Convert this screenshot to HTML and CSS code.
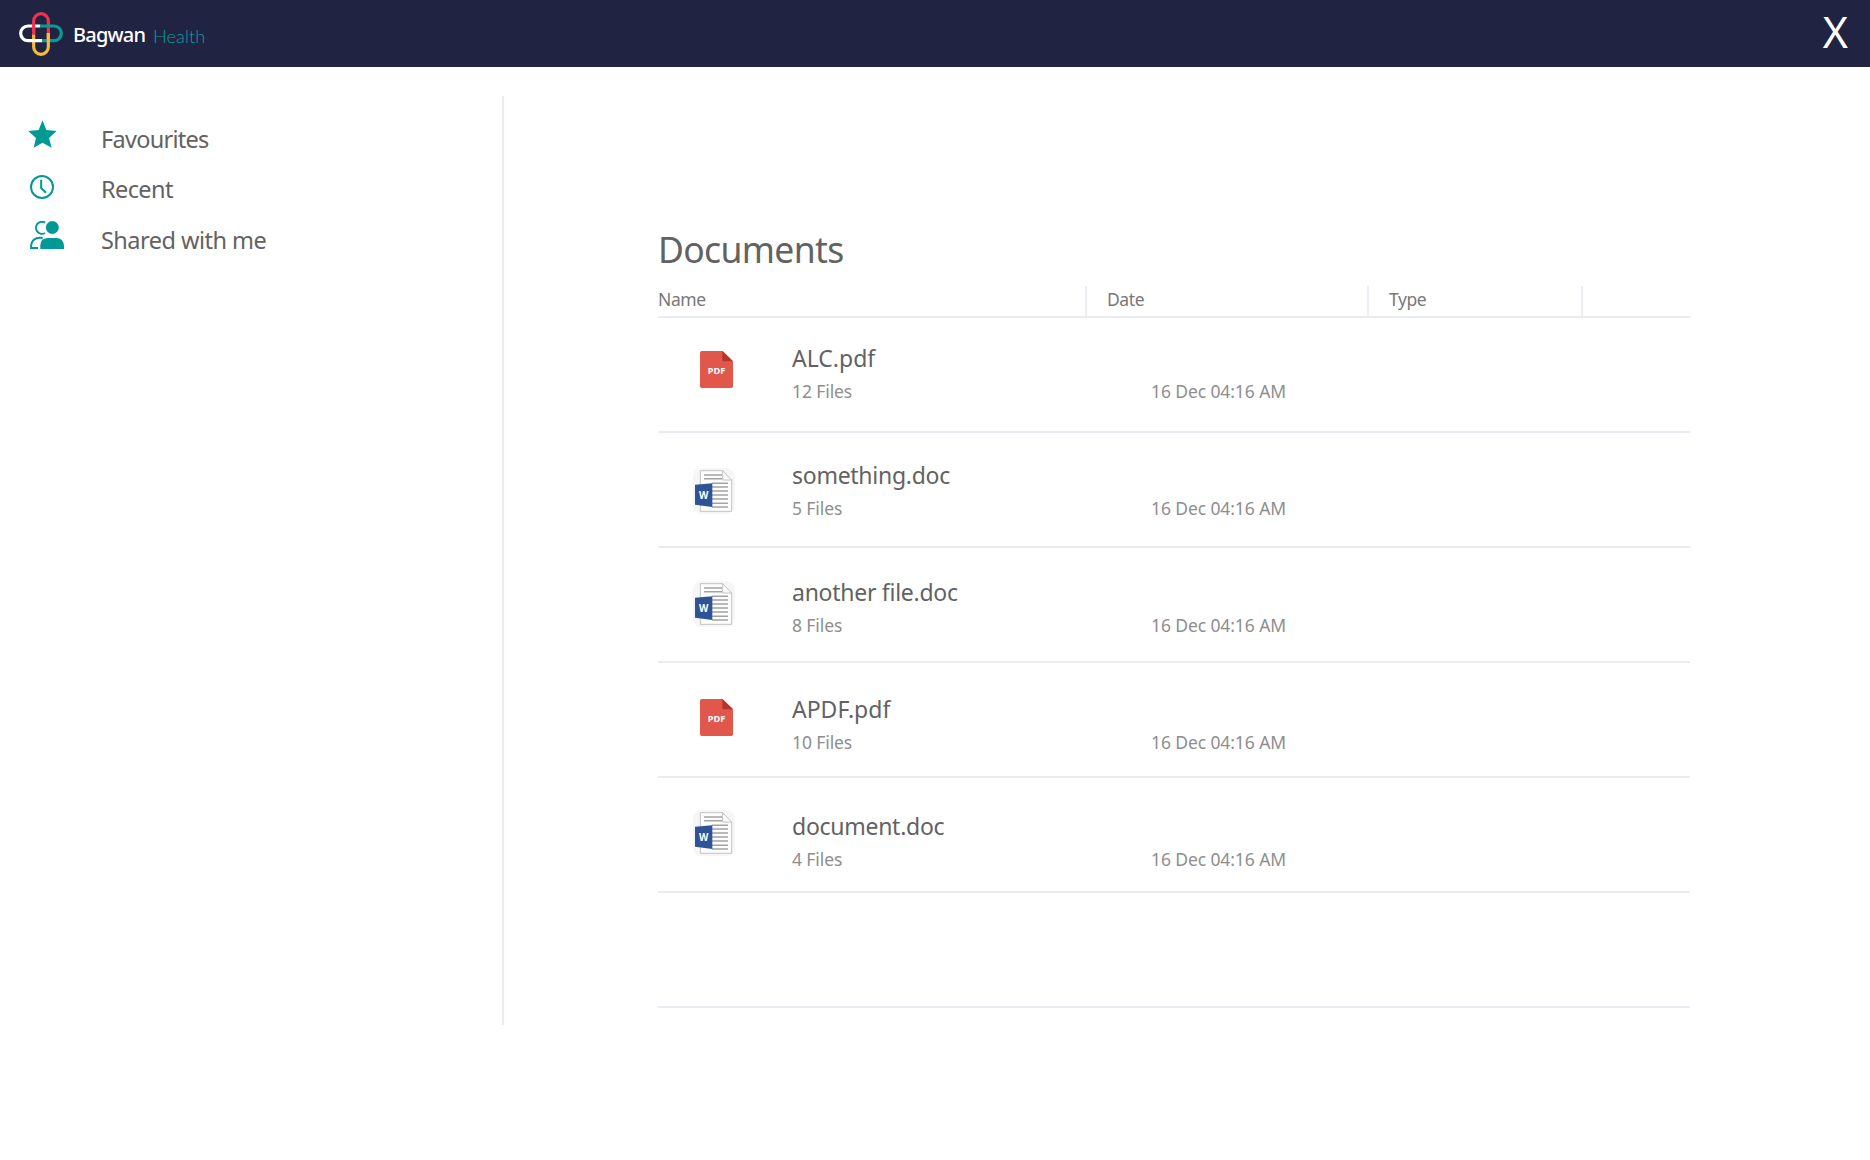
FILE: index.html
```html
<!DOCTYPE html>
<html lang="en">
<head>
<meta charset="utf-8">
<title>Bagwan Health - Documents</title>
<link rel="stylesheet" href="styles.css">
</head>
<body>
<svg class="defs" width="0" height="0" aria-hidden="true">
  <symbol id="pdf" viewBox="0 0 99 111">
    <path d="M5 0H68L99 31V106Q99 111 94 111H5Q0 111 0 106V5Q0 0 5 0Z" fill="#e2574c"/>
    <path d="M67 0L99 31H71Q67 31 67 27Z" fill="#b53629"/>
  </symbol>
  <symbol id="doc" viewBox="0 0 126 138">
    <rect width="126" height="138" rx="26" fill="#f6f6f6"/>
    <path d="M22 8H89L116 36V130H22Z" fill="#fcfcfc" stroke="#b9b9b9" stroke-width="2.5"/>
    <path d="M89 8V36H116" fill="none" stroke="#b9b9b9" stroke-width="2.5"/>
    <path d="M33 21H87M33 32H87M57 46H105M57 57H105M57 69H105M57 81H105M57 93H105M57 106H105M57 117H105" stroke="#a3a3a3" stroke-width="4.500"/>
    <path d="M6 50L58 46V117L6 110Z" fill="#2f5496"/>
  </symbol>
</svg>

<header class="topbar">
  <svg class="logo" width="50" height="50" viewBox="0 0 150 150" fill="none" stroke-width="9.500">
    <path d="M53 77V36a22 22 0 0 1 44 0V73" stroke="#ec3450"/>
    <path d="M53 76V114a22 22 0 0 0 44 0V72" stroke="#fbb93c"/>
    <path d="M73 51H36a22 22 0 0 0 0 44H79" stroke="#fff"/>
    <path d="M72 51H114a22 22 0 0 1 0 44H78" stroke="#0a9a94"/>
    <path d="M53 44V77" stroke="#ec3450"/>
    <path d="M97 72V101" stroke="#fbb93c"/>
  </svg>
  <span class="brand">Bagwan</span>
  <span class="brand-sub">Health</span>
  <button class="close" aria-label="Close">X</button>
</header>

<div class="page">
  <nav class="sidebar">
    <a class="nav-item">
      <svg class="nav-icon star" width="29" height="28" viewBox="0 0 87 84"><path d="M43.500 1L55 30L86 33L63 54L71 83L43.500 68L17 83L24 54L1 33L32 30Z" fill="#009994"/></svg>
      <span>Favourites</span>
    </a>
    <a class="nav-item">
      <svg class="nav-icon clock" width="24" height="24" viewBox="0 0 72 72" fill="none" stroke="#009994" stroke-width="6"><circle cx="36" cy="36" r="33"/><path d="M33.500 14V39L48 53"/></svg>
      <span>Recent</span>
    </a>
    <a class="nav-item">
      <svg class="nav-icon people" width="34" height="28" viewBox="0 0 102 84">
        <circle cx="67" cy="19.500" r="19.500" fill="#009994"/>
        <path d="M45 5A18 18 0 1 0 45 36" fill="none" stroke="#009994" stroke-width="6"/>
        <path d="M38 51Q3 46 3 81H24" fill="none" stroke="#009994" stroke-width="6"/>
        <path d="M31 84V73Q31 51 55 51H78Q102 51 102 77V84Z" fill="#009994"/>
      </svg>
      <span>Shared with me</span>
    </a>
  </nav>

  <main class="content">
    <h1>Documents</h1>
    <div class="columns">
      <span class="col-name">Name</span>
      <span class="col-date">Date</span>
      <span class="col-type">Type</span>
      <span class="col-end"></span>
    </div>
    <div class="rows">
      <div class="row">
        <svg class="icon-pdf" width="33" height="37" viewBox="0 0 99 111"><use href="#pdf"/><text x="23" y="69" class="pdf-label" textLength="53" lengthAdjust="spacingAndGlyphs">PDF</text></svg>
        <div class="file"><div class="file-name short">ALC.pdf</div><div class="meta">12 Files</div></div>
        <div class="date">16 Dec 04:16 AM</div>
      </div>
      <div class="row">
        <svg class="icon-doc" width="42" height="46" viewBox="0 0 126 138"><use href="#doc"/><text x="18" y="94" class="doc-label" textLength="28" lengthAdjust="spacingAndGlyphs">W</text></svg>
        <div class="file"><div class="file-name">something.doc</div><div class="meta">5 Files</div></div>
        <div class="date">16 Dec 04:16 AM</div>
      </div>
      <div class="row">
        <svg class="icon-doc" width="42" height="46" viewBox="0 0 126 138"><use href="#doc"/><text x="18" y="94" class="doc-label" textLength="28" lengthAdjust="spacingAndGlyphs">W</text></svg>
        <div class="file"><div class="file-name">another file.doc</div><div class="meta">8 Files</div></div>
        <div class="date">16 Dec 04:16 AM</div>
      </div>
      <div class="row">
        <svg class="icon-pdf" width="33" height="37" viewBox="0 0 99 111"><use href="#pdf"/><text x="23" y="69" class="pdf-label" textLength="53" lengthAdjust="spacingAndGlyphs">PDF</text></svg>
        <div class="file"><div class="file-name short">APDF.pdf</div><div class="meta">10 Files</div></div>
        <div class="date">16 Dec 04:16 AM</div>
      </div>
      <div class="row">
        <svg class="icon-doc" width="42" height="46" viewBox="0 0 126 138"><use href="#doc"/><text x="18" y="94" class="doc-label" textLength="28" lengthAdjust="spacingAndGlyphs">W</text></svg>
        <div class="file"><div class="file-name">document.doc</div><div class="meta">4 Files</div></div>
        <div class="date">16 Dec 04:16 AM</div>
      </div>
      <div class="row"></div>
    </div>
  </main>
</div>
</body>
</html>
```
FILE: styles.css
```css
* { box-sizing: border-box; }

body {
  margin: 0;
  background: #fff;
  color: #626262;
  font-family: "Noto Sans", "Open Sans", sans-serif;
}

.defs { position: absolute; }

.pdf-label { font: 700 28px "Open Sans", sans-serif; fill: #fff; }
.doc-label { font: 700 34px "Open Sans", sans-serif; fill: #fff; }

.topbar {
  display: flex;
  height: 67px;
  padding: 0 22px 0 16px;
  background: #202341;
  color: #fff;
}
.logo { margin-top: 9px; }
.brand {
  width: 79px;
  margin-left: 7px;
  font-size: 20px;
  font-weight: 500;
  line-height: 69px;
  letter-spacing: -0.8px;
}
.brand-sub {
  margin-left: 1px;
  color: #0aa09b;
  font-family: Lato, sans-serif;
  font-size: 18.3px;
  font-weight: 300;
  line-height: 72px;
}
.close {
  margin-left: auto;
  padding: 0;
  border: 0;
  background: none;
  color: #fff;
  font: 400 43px/64px "Noto Sans", sans-serif;
  height: 64px;
}

.page { display: flex; }

.sidebar {
  width: 504px;
  height: 929px;
  margin-top: 29px;
  padding-top: 18px;
  border-right: 2px solid #ebebf3;
  font-size: 23.5px;
  letter-spacing: -0.6px;
}
.nav-item {
  display: grid;
  grid-template-columns: 101px auto;
  height: 50px;
  line-height: 50px;
}
.nav-item:first-child { letter-spacing: -0.72px; }
.nav-item:last-child { margin-top: 1px; letter-spacing: -0.53px; }
.star { margin: 5.500px 0 0 27.500px; }
.clock { margin: 11px 0 0 30px; }
.people { margin: 6px 0 0 30px; }

.content {
  width: 1032px;
  margin: 153px 0 0 154px;
}
h1 {
  margin: 0;
  font-size: 35.5px;
  font-weight: 400;
  letter-spacing: -0.65px;
  line-height: 58px;
}
.columns {
  display: grid;
  grid-template-columns: 427px 282px 214px 1fr;
  height: 40px;
  padding-top: 8px;
  border-bottom: 2px solid #ebebf3;
  color: #787878;
  font-size: 17.5px;
  letter-spacing: -0.4px;
  line-height: 26px;
}
.col-date, .col-type, .col-end {
  padding-left: 20px;
  border-left: 2px solid #ededf5;
}

.row {
  --text-top: 24px;
  --icon-top: 33px;
  display: grid;
  grid-template-columns: 134px 359px 1fr;
  height: 115px;
  border-bottom: 2px solid #ebebf3;
}
.row:nth-child(2) { --text-top: 26px; --icon-top: 34.500px; }
.row:nth-child(3) { --text-top: 28px; --icon-top: 33px; }
.row:nth-child(4) { --text-top: 30px; --icon-top: 36px; }
.row:nth-child(5) { --text-top: 32px; --icon-top: 31.500px; }

.icon-pdf { margin: var(--icon-top) 0 0 42px; }
.icon-doc { margin: var(--icon-top) 0 0 35px; }
.file { padding-top: var(--text-top); white-space: nowrap; }
.file-name { font-size: 23px; letter-spacing: -0.27px; line-height: 32px; }
.file-name.short { letter-spacing: 0; }
.meta, .date { color: #8e8e8e; font-size: 17.5px; letter-spacing: -0.1px; line-height: 34px; }
.date { padding-top: calc(var(--text-top) + 32px); }
```
